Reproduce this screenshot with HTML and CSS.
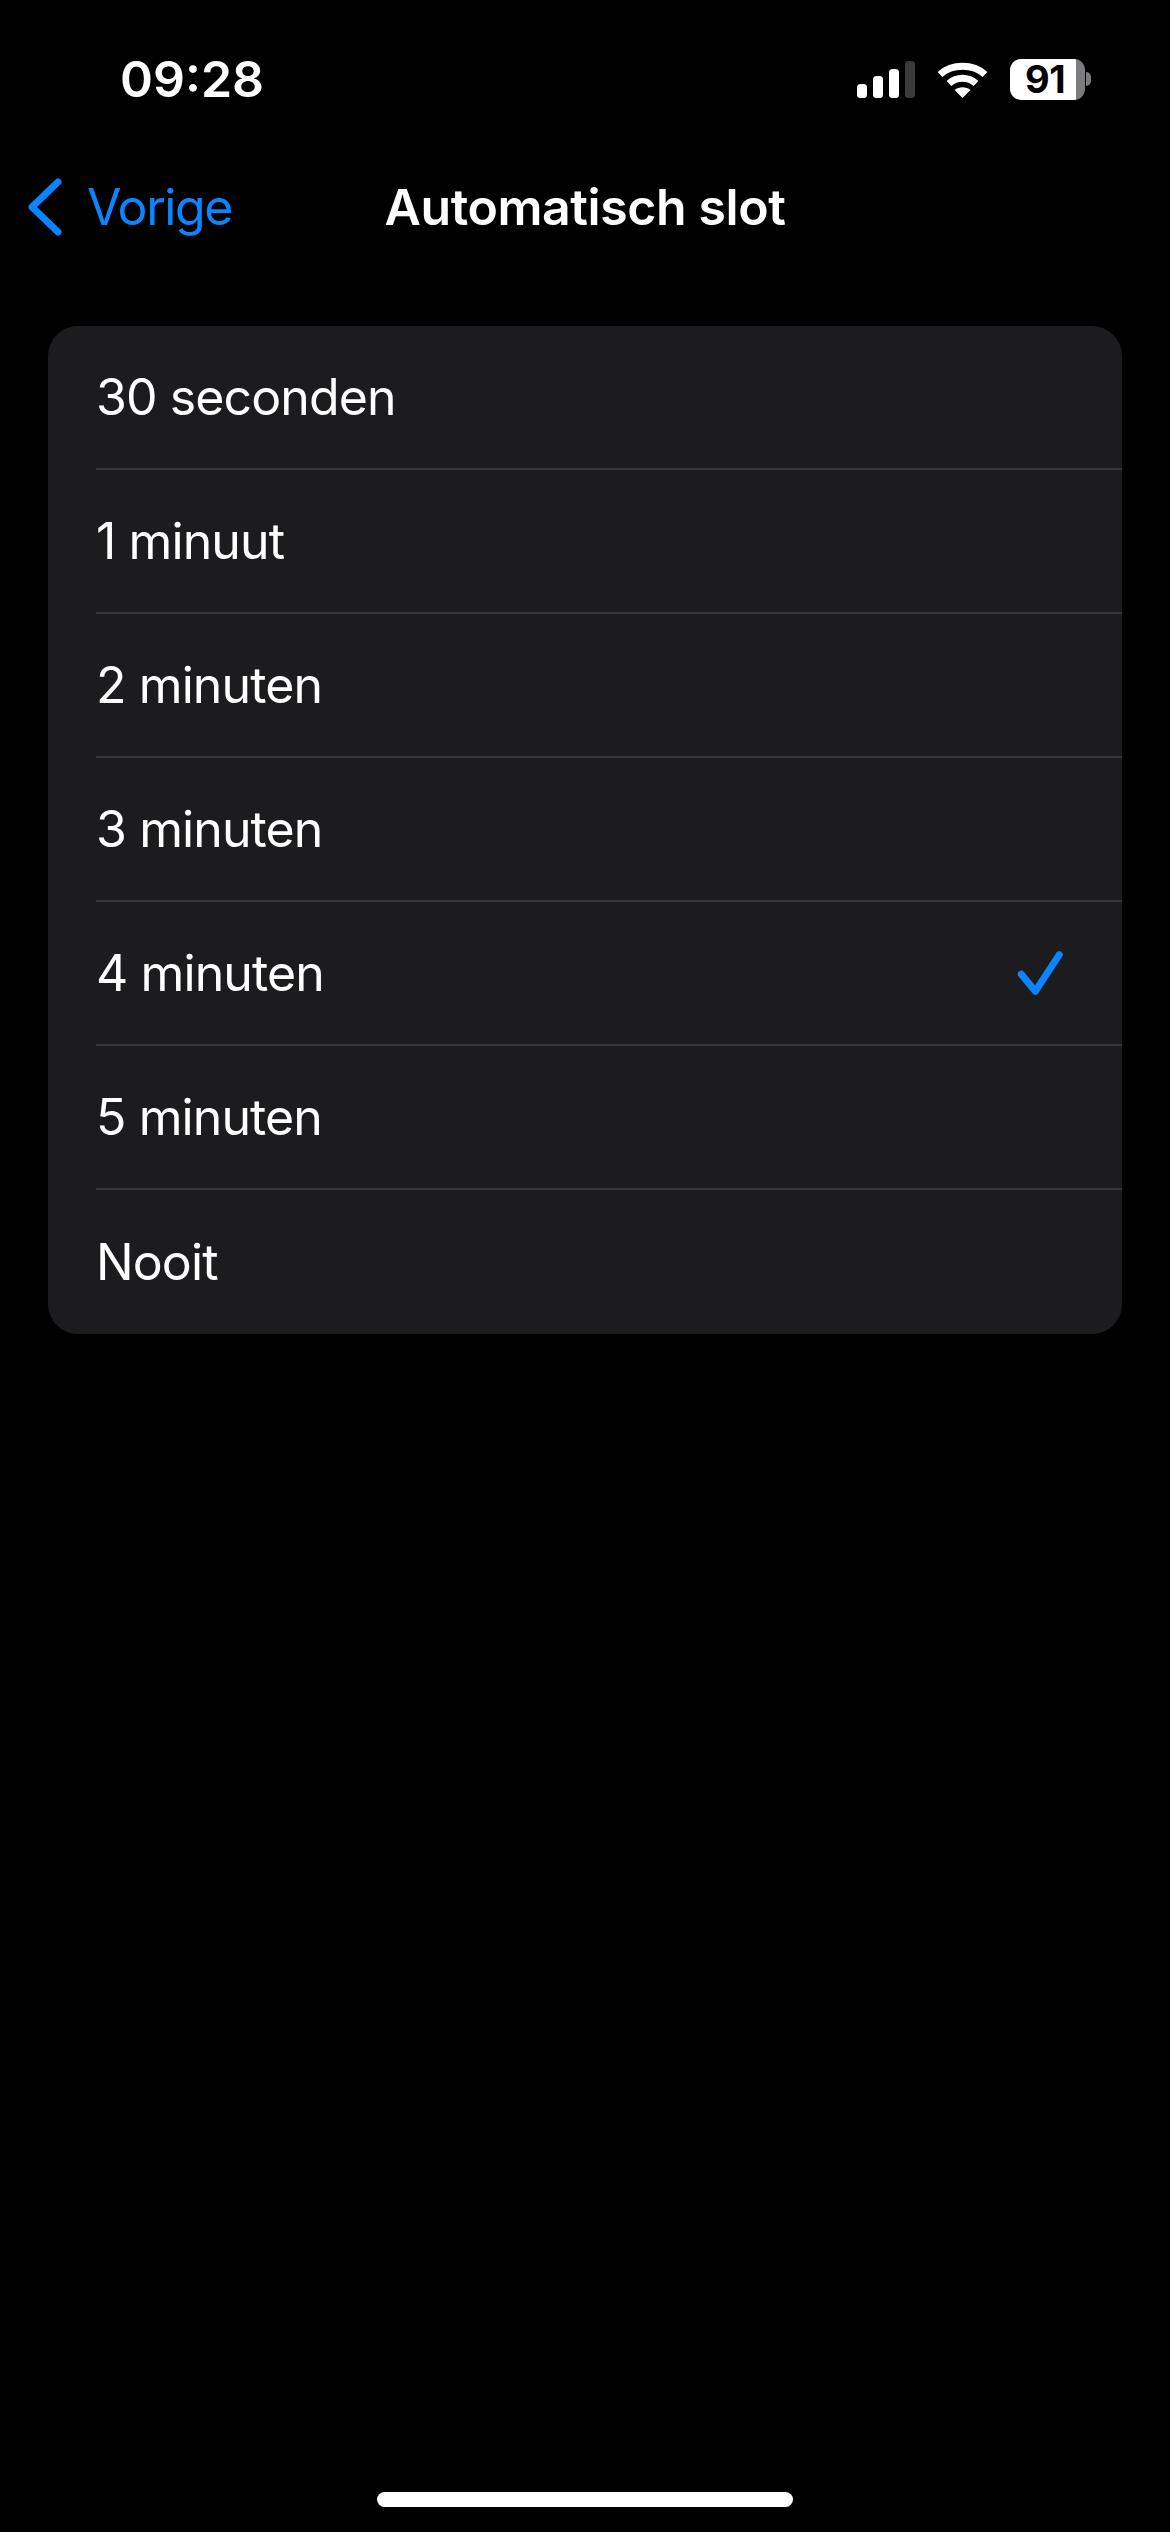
FILE: index.html
```html
<!doctype html>
<html>
<head>
    <title>Automatisch slot</title>
    <meta charset="utf-8" />
    <meta name="viewport" content="width=device-width, initial-scale=1" />
    <link rel="stylesheet" href="styles.css">
</head>

<body>
	<div class="screen">
		<div class="statusBar">
			<span class="time">09:28</span>
			<div class="statusIcons">
				<svg class="signal" width="58" height="37" viewBox="0 0 58 37">
					<rect x="0" y="23" width="10" height="14" rx="3.5" fill="#fff"/>
					<rect x="16" y="15" width="10" height="22" rx="3.5" fill="#fff"/>
					<rect x="32" y="8" width="10" height="29" rx="3.5" fill="#fff"/>
					<rect x="48" y="0" width="10" height="37" rx="3.5" fill="#3a3a3c"/>
				</svg>
				<svg class="wifi" width="51" height="37" viewBox="0 0 51 37">
					<path d="M3 13.5 C15 2.5 36 2.5 48 13.5" fill="none" stroke="#fff" stroke-width="7" stroke-linecap="butt"/>
					<path d="M12 22.5 C19.5 15.5 31.5 15.5 39 22.5" fill="none" stroke="#fff" stroke-width="7"/>
					<path d="M25.5 37 L17.5 29 C22 25.2 29 25.2 33.5 29 Z" fill="#fff"/>
				</svg>
				<div class="battery">
					<div class="batteryBody"><span class="batteryText">91</span></div>
					<div class="batteryNub"></div>
				</div>
			</div>
		</div>

		<div class="navBar">
			<div class="backLink">
				<svg class="chevron" width="36" height="58" viewBox="0 0 36 58">
					<path d="M31 4 L5 29 L31 54" fill="none" stroke="#0a84ff" stroke-width="7" stroke-linecap="round" stroke-linejoin="round"/>
				</svg>
				<span>Vorige</span>
			</div>
			<div class="navTitle">Automatisch slot</div>
		</div>

		<div class="optionList">
			<div class="optionRow"><span>30 seconden</span></div>
			<div class="optionRow"><span>1 minuut</span></div>
			<div class="optionRow"><span>2 minuten</span></div>
			<div class="optionRow"><span>3 minuten</span></div>
			<div class="optionRow"><span>4 minuten</span>
				<svg class="check" width="46" height="46" viewBox="0 0 46 46">
					<path d="M4.3 24.3 L18.3 41.3 L42.3 4.7" fill="none" stroke="#0a84ff" stroke-width="7" stroke-linecap="round" stroke-linejoin="round"/>
				</svg>
			</div>
			<div class="optionRow"><span>5 minuten</span></div>
			<div class="optionRow"><span>Nooit</span></div>
		</div>

		<div class="spacer"></div>
		<div class="homeIndicator"></div>
	</div>
</body>
</html>
```

FILE: styles.css
```css
html, body {
	margin: 0;
	padding: 0;
	background-color: #000;
}
body {
	font-family: Inter, "Liberation Sans", sans-serif;
	color: #fff;
}
.screen {
	display: flex;
	flex-direction: column;
	height: 2532px;
	box-sizing: border-box;
}

/* status bar */
.statusBar {
	display: flex;
	justify-content: space-between;
	align-items: center;
	height: 78px;
	padding: 40px 79px 0 120px;
}
.time {
	font-size: 50px;
	font-weight: 600;
	line-height: 78px;
}
.statusIcons {
	display: flex;
	align-items: center;
	gap: 22px;
}
.battery {
	display: flex;
	align-items: center;
	gap: 1px;
}
.batteryBody {
	width: 75px;
	height: 41px;
	box-sizing: border-box;
	border-radius: 11px;
	background: linear-gradient(to right, #fff 88%, #7c7c7e 88%);
	color: #000;
	font-size: 38px;
	font-weight: 700;
	letter-spacing: -0.5px;
	line-height: 41px;
	padding-left: 15px;
}
.batteryNub {
	width: 5px;
	height: 14px;
	background-color: #7c7c7e;
	border-radius: 0 7px 7px 0;
}

/* nav bar */
.navBar {
	position: relative;
	display: flex;
	align-items: center;
	justify-content: center;
	height: 84px;
	margin-top: 47px;
}
.backLink {
	position: absolute;
	left: 27px;
	top: 0;
	bottom: 0;
	display: flex;
	align-items: center;
	gap: 24px;
	color: #0a84ff;
	font-size: 50px;
	letter-spacing: -1.4px;
}
.navTitle {
	font-size: 50px;
	font-weight: 600;
	letter-spacing: -0.4px;
}

/* list */
.optionList {
	margin: 77px 48px 0 48px;
	background-color: #1c1c1e;
	border-radius: 30px;
	overflow: hidden;
}
.optionRow {
	display: flex;
	align-items: center;
	justify-content: space-between;
	height: 144px;
	box-sizing: border-box;
	margin-left: 48px;
	padding-right: 59px;
	font-size: 50px;
	letter-spacing: -0.9px;
	border-bottom: 2px solid #38383a;
}
.optionRow:last-child {
	border-bottom: 0;
}

.spacer {
	flex: 1;
}
.homeIndicator {
	width: 416px;
	height: 15px;
	margin: 0 auto 25px auto;
	background-color: #fff;
	border-radius: 8px;
}
```
